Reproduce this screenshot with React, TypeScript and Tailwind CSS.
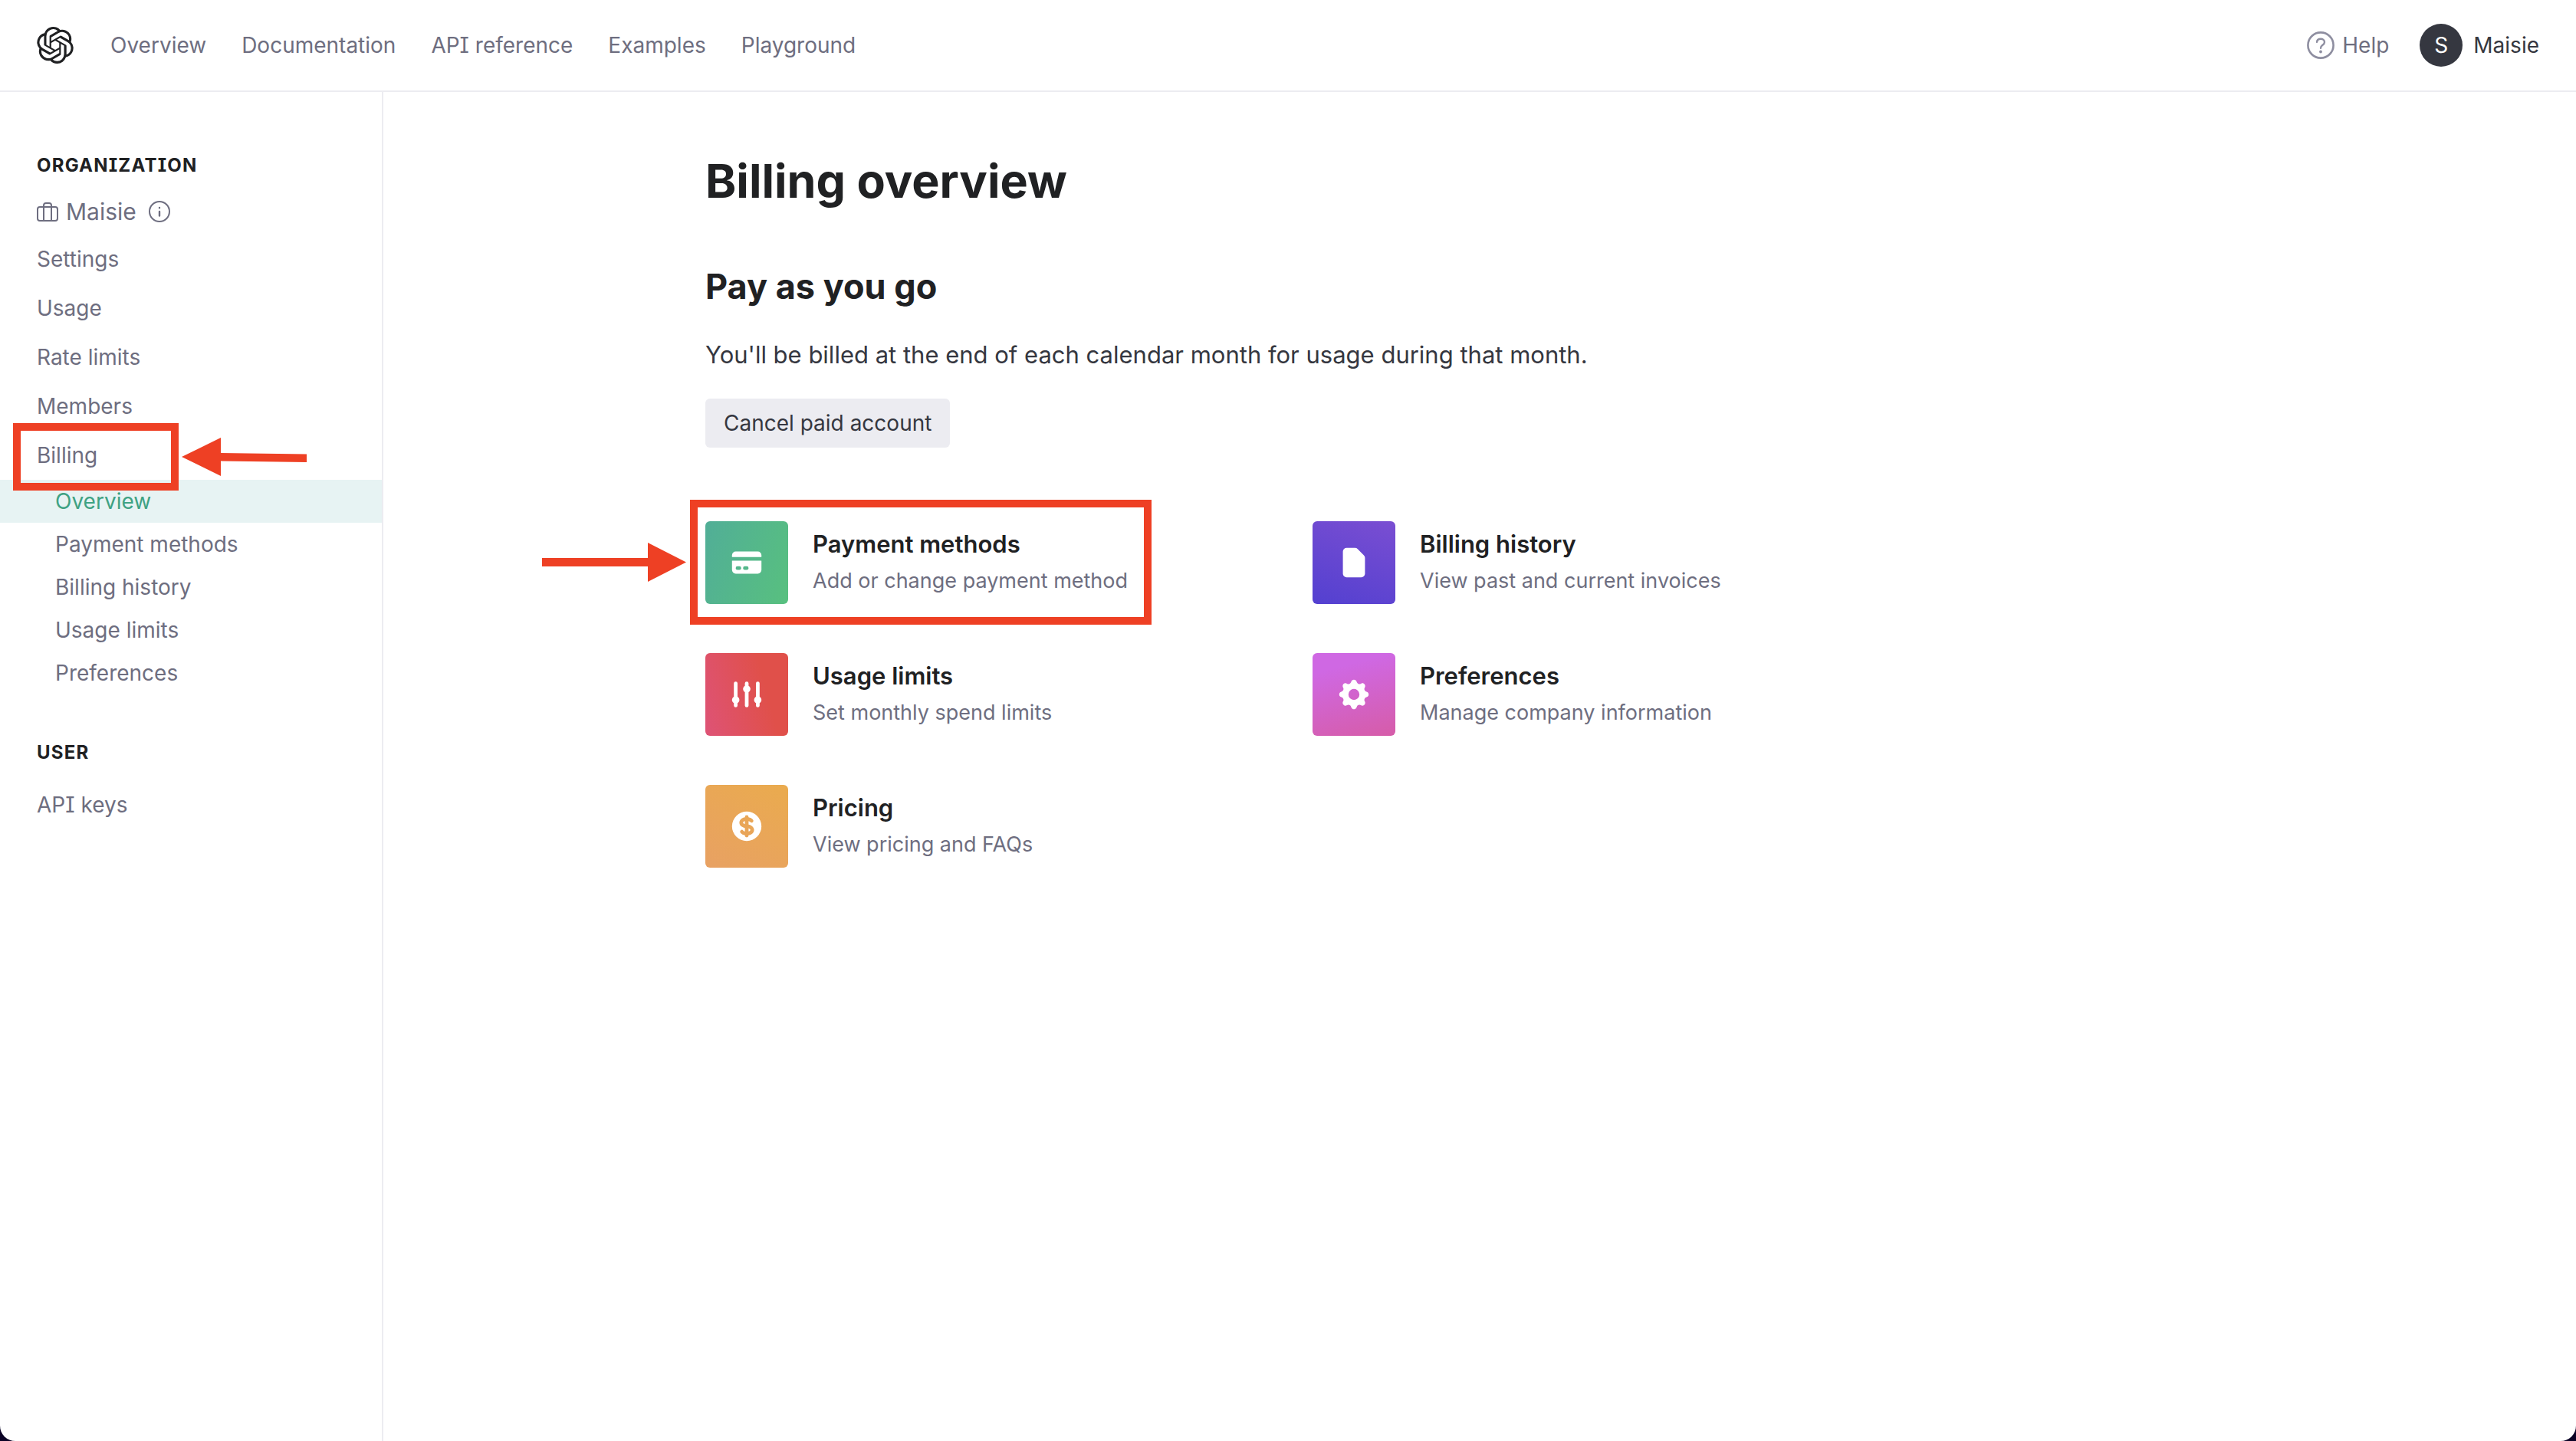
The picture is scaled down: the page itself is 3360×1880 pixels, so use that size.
import type { ReactNode } from "react";
import { HiAdjustments, HiCog, HiCreditCard, HiCurrencyDollar, HiDocument } from "react-icons/hi";
import { SiOpenai } from "react-icons/si";

const topLinks = ["Overview", "Documentation", "API reference", "Examples", "Playground"];
const orgLinks = ["Settings", "Usage", "Rate limits", "Members"];
const billingLinks = ["Overview", "Payment methods", "Billing history", "Usage limits", "Preferences"];

function BriefcaseIcon() {
  return (
    <svg className="h-[25px] w-7 shrink-0" viewBox="0 0 28 25" fill="none" stroke="currentColor" strokeWidth="2" aria-hidden="true">
      <rect x="1" y="6" width="26" height="18" rx="3" />
      <path d="M9 24V4a3 3 0 0 1 3-3h4a3 3 0 0 1 3 3v20" />
    </svg>
  );
}

function InfoIcon() {
  return (
    <svg className="size-7" viewBox="0 0 28 28" fill="none" stroke="currentColor" strokeWidth="2" strokeLinecap="round" aria-hidden="true">
      <circle cx="14" cy="14" r="13" />
      <path d="M14 14v5.5M14 9v.2" strokeWidth="2.4" />
    </svg>
  );
}

function HelpIcon() {
  return (
    <svg className="size-9" viewBox="0 0 36 36" fill="none" stroke="#8e8ea0" strokeLinecap="round" aria-hidden="true">
      <circle cx="18" cy="18" r="16.6" strokeWidth="2.6" />
      <path d="M13 13.8c.3-2.6 2.3-4 5-4s5 1.5 5 4.1c0 2-1.2 2.9-2.8 4-1.500 1-2.200 1.800-2.200 3.900" strokeWidth="2.4" />
      <circle cx="18" cy="26.5" r="1.9" fill="#8e8ea0" stroke="none" />
    </svg>
  );
}

function Card({ title, text, tile, icon, children }: { title: string; text: string; tile: string; icon: ReactNode; children?: ReactNode }) {
  return (
    <div className="relative">
      <a href="#" className="flex items-center gap-8">
        <span className={`flex size-[108px] shrink-0 items-center justify-center rounded-md text-white ${tile}`}>{icon}</span>
        <span className="flex flex-col">
          <span className="text-[31px] leading-[48px] font-semibold text-[#202123]">{title}</span>
          <span className="text-[27px] leading-[48px] text-[#6e6e80]">{text}</span>
        </span>
      </a>
      {children}
    </div>
  );
}

export default function App() {
  return (
    <div className="min-h-screen bg-[#0b0326] font-['Inter',sans-serif] text-[28px] text-[#6e6e80] [font-feature-settings:'cv08']">
      <div className="flex min-h-screen flex-col rounded-b-[20px] bg-white">
        <header className="flex h-[120px] items-center justify-between border-b-2 border-[#ececf1] px-12">
          <nav className="flex items-center gap-12">
            <a href="#" aria-label="Home" className="text-[#202123]">
              <SiOpenai className="size-12" />
            </a>
            <div className="flex items-center gap-[46px]">
              {topLinks.map((label) => (
                <a key={label} href="#">{label}</a>
              ))}
            </div>
          </nav>
          <div className="flex items-center gap-10">
            <button type="button" className="flex items-center gap-2.5">
              <HelpIcon />
              Help
            </button>
            <button type="button" className="flex items-center gap-3.5 text-[#353740]">
              <span className="flex size-14 items-center justify-center rounded-full bg-[#353740] text-white">S</span>
              Maisie
            </button>
          </div>
        </header>

        <div className="flex flex-1">
          <aside className="w-[500px] shrink-0 border-r-2 border-[#ececf1] pt-20">
            <h2 className="mb-4 px-12 text-[24px] leading-8 font-bold tracking-wider text-[#202123]">ORGANIZATION</h2>
            <div className="flex h-14 items-center px-12">
              <BriefcaseIcon />
              <span className="ml-2.5 text-[30px]">Maisie</span>
              <button type="button" aria-label="About this organization" className="ml-4">
                <InfoIcon />
              </button>
            </div>
            <ul className="mt-0.5">
              {orgLinks.map((label) => (
                <li key={label}>
                  <a href="#" className="flex h-16 items-center px-12">{label}</a>
                </li>
              ))}
              <li className="relative">
                <a href="#" className="flex h-16 items-center px-12">Billing</a>
                <span className="pointer-events-none absolute -top-2.5 left-[17px] z-10 h-[88px] w-[216px] border-10 border-[#ee4024]" />
                <svg className="absolute top-[9px] left-[237px] z-10 h-[50px] w-[163px]" viewBox="0 0 163 50" fill="#ee4024" aria-hidden="true">
                  <path d="M0 25 51 0V20L163 21.5V32L51 30.5V50Z" />
                </svg>
              </li>
            </ul>
            <ul>
              {billingLinks.map((label, i) => (
                <li key={label}>
                  <a href="#" className={`flex h-14 items-center px-[72px] ${i === 0 ? "bg-[#e7f3f3] text-[#3fa283]" : ""}`}>{label}</a>
                </li>
              ))}
            </ul>
            <h2 className="mt-[60px] mb-5 px-12 text-[24px] leading-8 font-bold tracking-wider text-[#202123]">USER</h2>
            <a href="#" className="flex h-16 items-center px-12">API keys</a>
          </aside>

          <main className="flex-1 pt-20">
            <div className="mx-auto max-w-[2020px]">
              <h1 className="text-[61px] leading-[72px] font-bold text-[#202123]">Billing overview</h1>
              <h2 className="mt-[74px] text-[45px] leading-[56px] font-bold text-[#202123]">Pay as you go</h2>
              <p className="mt-9 text-[31px] leading-[50px] text-[#353740]">
                You'll be billed at the end of each calendar month for usage during that month.
              </p>
              <button type="button" className="mt-8 flex h-16 items-center rounded-md bg-[#ececf1] px-6 text-[#353740]">
                Cancel paid account
              </button>
              <div className="mt-24 grid max-w-[1584px] grid-cols-2 gap-y-16">
                <Card
                  title="Payment methods"
                  text="Add or change payment method"
                  tile="bg-[linear-gradient(110deg,#51ae97,#58c07f)]"
                  icon={<HiCreditCard className="size-12" />}
                >
                  <span className="pointer-events-none absolute -top-7 -left-5 h-[163px] w-[602px] border-10 border-[#ee4024]" />
                  <svg className="absolute top-7 -left-[213px] h-[51px] w-[188px]" viewBox="0 0 188 51" fill="#ee4024" aria-hidden="true">
                    <path d="M0 20H138V0L188 25.5 138 51V31H0Z" />
                  </svg>
                </Card>
                <Card
                  title="Billing history"
                  text="View past and current invoices"
                  tile="bg-[linear-gradient(20deg,#5340d0,#7a4ed2)]"
                  icon={<HiDocument className="size-12" />}
                />
                <Card
                  title="Usage limits"
                  text="Set monthly spend limits"
                  tile="bg-[linear-gradient(75deg,#de5376,#e0504a_70%)]"
                  icon={<HiAdjustments className="size-12" />}
                />
                <Card
                  title="Preferences"
                  text="Manage company information"
                  tile="bg-[linear-gradient(165deg,#cf68e3_20%,#d65ca8)]"
                  icon={<HiCog className="size-12" />}
                />
                <Card
                  title="Pricing"
                  text="View pricing and FAQs"
                  tile="bg-[linear-gradient(30deg,#e8a163,#eaab4e)]"
                  icon={<HiCurrencyDollar className="size-12" />}
                />
              </div>
            </div>
          </main>
        </div>
      </div>
    </div>
  );
}
